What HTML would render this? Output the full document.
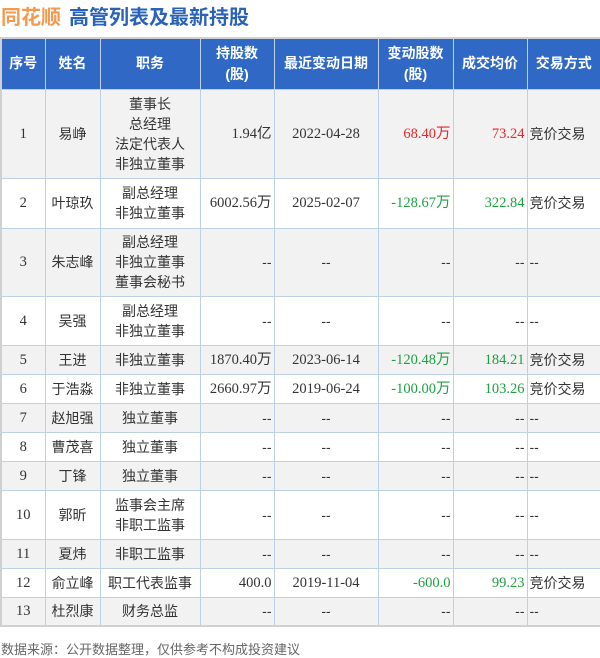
<!DOCTYPE html>
<html><head><meta charset="utf-8"><style>
body{margin:0;width:600px;height:657px;background:#fff;font-family:"Liberation Sans","Noto Sans CJK SC",sans-serif;position:relative;overflow:hidden}
.title{position:absolute;left:1px;top:1px;font-size:20px;font-weight:bold;white-space:nowrap}
.title .a{color:#f39a4e}.title .b{color:#2a62b8;margin-left:8px}
table{position:absolute;left:0;top:37px;border-collapse:collapse;table-layout:fixed;width:600px;border:2px solid #d0d0d0}
td,th{border:1px solid #bcd0e6;font-size:14px;color:#333;padding:0 2px;line-height:20px}
th{background:#2f69c5;color:#fff;font-weight:bold;font-size:14px;text-align:center;line-height:21px}
td{text-align:center}
tr:nth-child(even) td{background:#f2f2f2}
.n{font-family:"Liberation Serif","Noto Sans CJK SC",serif;font-size:14.5px}
.r{text-align:right}
.l{text-align:left}
.red{color:#e8262b}.grn{color:#1fa042}
.foot{position:absolute;left:1px;top:639px;font-size:13px;color:#666}
</style></head><body>
<div class="title"><span class="a">同花顺</span><span class="b">高管列表及最新持股</span></div>
<table>
<colgroup><col style="width:44px"><col style="width:55px"><col style="width:100px"><col style="width:74px"><col style="width:104px"><col style="width:75px"><col style="width:74px"><col style="width:74px"></colgroup>
<tr style="height:51px"><th>序号</th><th>姓名</th><th>职务</th><th>持股数<br>(股)</th><th>最近变动日期</th><th>变动股数<br>(股)</th><th>成交均价</th><th>交易方式</th></tr>
<tr style="height:89px"><td class="n">1</td><td>易峥</td><td>董事长<br>总经理<br>法定代表人<br>非独立董事</td><td class="n r">1.94亿</td><td class="n">2022-04-28</td><td class="n r red">68.40万</td><td class="n r red">73.24</td><td class="l">竞价交易</td></tr>
<tr style="height:50px"><td class="n">2</td><td>叶琼玖</td><td>副总经理<br>非独立董事</td><td class="n r">6002.56万</td><td class="n">2025-02-07</td><td class="n r grn">-128.67万</td><td class="n r grn">322.84</td><td class="l">竞价交易</td></tr>
<tr style="height:68px"><td class="n">3</td><td>朱志峰</td><td>副总经理<br>非独立董事<br>董事会秘书</td><td class="r">--</td><td>--</td><td class="r">--</td><td class="r">--</td><td class="l">--</td></tr>
<tr style="height:49px"><td class="n">4</td><td>吴强</td><td>副总经理<br>非独立董事</td><td class="r">--</td><td>--</td><td class="r">--</td><td class="r">--</td><td class="l">--</td></tr>
<tr style="height:29px"><td class="n">5</td><td>王进</td><td>非独立董事</td><td class="n r">1870.40万</td><td class="n">2023-06-14</td><td class="n r grn">-120.48万</td><td class="n r grn">184.21</td><td class="l">竞价交易</td></tr>
<tr style="height:29px"><td class="n">6</td><td>于浩淼</td><td>非独立董事</td><td class="n r">2660.97万</td><td class="n">2019-06-24</td><td class="n r grn">-100.00万</td><td class="n r grn">103.26</td><td class="l">竞价交易</td></tr>
<tr style="height:29px"><td class="n">7</td><td>赵旭强</td><td>独立董事</td><td class="r">--</td><td>--</td><td class="r">--</td><td class="r">--</td><td class="l">--</td></tr>
<tr style="height:29px"><td class="n">8</td><td>曹茂喜</td><td>独立董事</td><td class="r">--</td><td>--</td><td class="r">--</td><td class="r">--</td><td class="l">--</td></tr>
<tr style="height:29px"><td class="n">9</td><td>丁锋</td><td>独立董事</td><td class="r">--</td><td>--</td><td class="r">--</td><td class="r">--</td><td class="l">--</td></tr>
<tr style="height:49px"><td class="n">10</td><td>郭昕</td><td>监事会主席<br>非职工监事</td><td class="r">--</td><td>--</td><td class="r">--</td><td class="r">--</td><td class="l">--</td></tr>
<tr style="height:29px"><td class="n">11</td><td>夏炜</td><td>非职工监事</td><td class="r">--</td><td>--</td><td class="r">--</td><td class="r">--</td><td class="l">--</td></tr>
<tr style="height:29px"><td class="n">12</td><td>俞立峰</td><td>职工代表监事</td><td class="n r">400.0</td><td class="n">2019-11-04</td><td class="n r grn">-600.0</td><td class="n r grn">99.23</td><td class="l">竞价交易</td></tr>
<tr style="height:29px"><td class="n">13</td><td>杜烈康</td><td>财务总监</td><td class="r">--</td><td>--</td><td class="r">--</td><td class="r">--</td><td class="l">--</td></tr>
</table>
<div class="foot">数据来源：公开数据整理，仅供参考不构成投资建议</div>
</body></html>
